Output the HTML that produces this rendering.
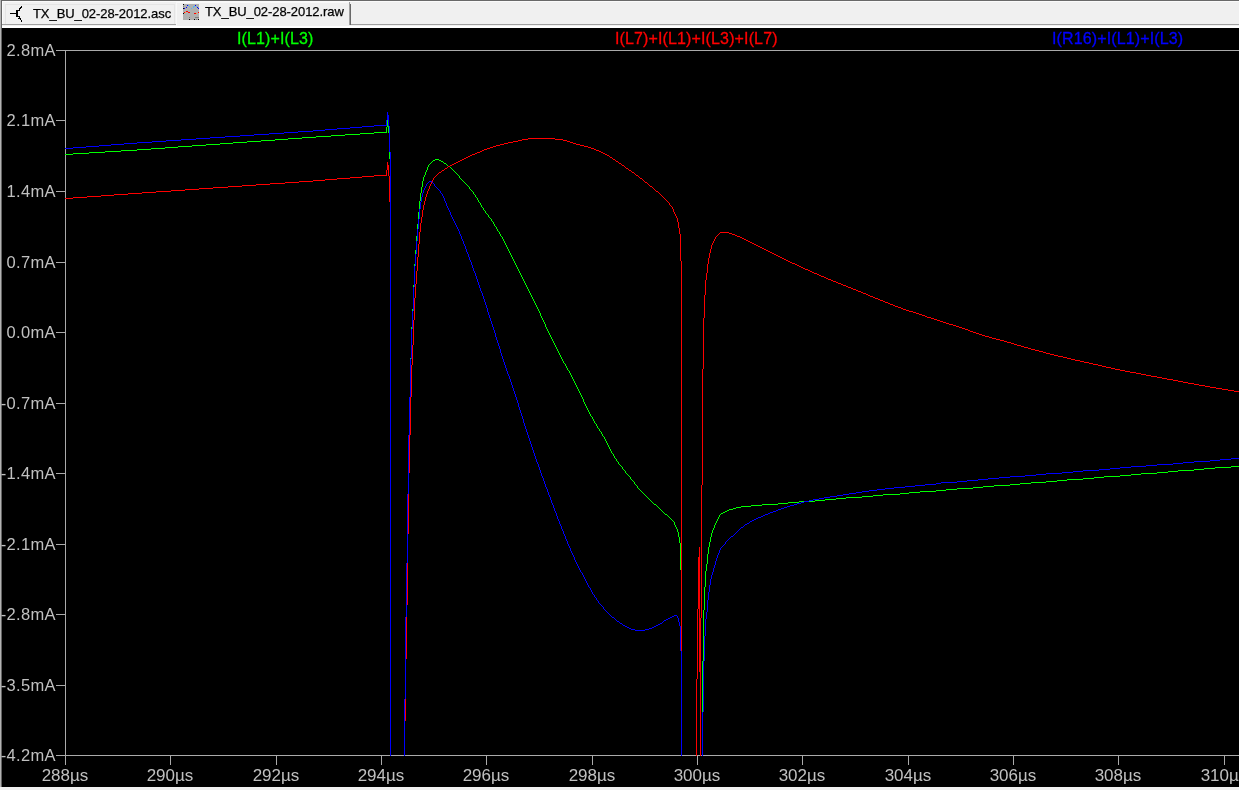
<!DOCTYPE html>
<html><head><meta charset="utf-8"><title>TX_BU_02-28-2012.raw</title>
<style>
html,body{margin:0;padding:0;}
body{width:1239px;height:790px;overflow:hidden;background:#000;position:relative;font-family:"Liberation Sans",sans-serif;}
.tabbar{position:absolute;left:0;top:0;width:1239px;height:28px;background:#f0f0f0;}
.tabbar .t0{position:absolute;left:0;top:0;width:1239px;height:1px;background:#696969;}
.tabbar .t1{position:absolute;left:0;top:1px;width:1239px;height:1px;background:#fafafa;}
.tabbar .l1{position:absolute;left:2px;top:1px;width:1px;height:24px;background:#fafafa;}
.tabbar .b0{position:absolute;left:0;top:24px;width:1239px;height:1px;background:#a0a0a0;}
.tabbar .b1{position:absolute;left:0;top:26px;width:1239px;height:2px;background:#fff;}
.lb{position:absolute;left:0;top:0;width:1px;height:787px;background:#b4b4b4;border-right:1px solid #646464;}
.bb{position:absolute;left:0;top:787px;width:1239px;height:3px;background:#f0f0f0;}
.tab1b{position:absolute;left:5px;top:4px;width:170px;height:20px;border:1px solid #e4e4e4;border-bottom:none;box-sizing:border-box;}
.tab2b{position:absolute;left:176px;top:2px;width:173px;height:24px;background:#f0f0f0;border-left:1px solid #f8f8f8;border-top:1px solid #f8f8f8;box-sizing:border-box;}
.tab2r1{position:absolute;left:349px;top:2px;width:1px;height:23px;background:#a0a0a0;}
.tab2r2{position:absolute;left:350px;top:4px;width:1px;height:21px;background:#696969;}
.tt{position:absolute;font-size:13px;line-height:15px;color:#000;-webkit-text-stroke:0.25px #000;white-space:nowrap;letter-spacing:-0.07px;will-change:transform;}
.plot{position:absolute;left:0;top:0;}
.yl{position:absolute;left:0;width:55.8px;letter-spacing:0.3px;text-align:right;font-size:16.5px;line-height:18px;will-change:transform;color:#c0c0c0;white-space:nowrap;}
.xl{position:absolute;top:767px;width:80px;text-align:center;font-size:17px;line-height:18px;will-change:transform;color:#c0c0c0;white-space:nowrap;}
.tl{position:absolute;top:30px;font-size:16px;line-height:18px;white-space:nowrap;letter-spacing:0.13px;will-change:transform;-webkit-text-stroke:0.3px currentColor;}
</style></head><body>
<div class="tabbar"><div class="t0"></div><div class="t1"></div><div class="l1"></div><div class="b0"></div><div class="b1"></div>
<div class="tab1b"></div><div class="tab2b"></div><div class="tab2r1"></div><div class="tab2r2"></div><svg width="30" height="28" style="position:absolute;left:0;top:0" shape-rendering="crispEdges"><path d="M21 6h1v1h-1zM20 7h2v1h-2zM19 8h2v1h-2zM19 9h1v1h-1zM16 10h4v1h-4zM16 11h2v1h-2zM16 12h2v1h-2zM10 13h8v1h-8zM16 14h2v1h-2zM16 15h2v1h-2zM16 16h4v1h-4zM19 17h1v1h-1zM18 18h3v1h-3zM20 19h1v1h-1zM21 20h1v1h-1zM21 21h1v1h-1z" fill="#000"/></svg><svg width="16" height="16" style="position:absolute;left:183px;top:4px" shape-rendering="crispEdges"><rect width="16" height="16" fill="#b0b0b0"/><path d="M0 0h1v1h-1zM0 4h1v1h-1zM0 9h1v1h-1zM6 15h1v1h-1zM11 15h1v1h-1zM15 15h1v1h-1z" fill="#000"/><path d="M0 2h1v1h-1zM6 13h1v1h-1zM12 13h1v1h-1zM13 13h1v1h-1zM14 13h1v1h-1zM15 13h1v1h-1zM13 15h1v1h-1z" fill="#808080"/><path d="M1 4h1v1h-1zM3 3h1v1h-1zM4 1h1v1h-1zM12 1h1v1h-1zM14 3h1v1h-1zM15 4h1v1h-1z" fill="#0000ff"/><path d="M6 2h1v1h-1zM8 4h1v1h-1zM10 3h1v1h-1zM10 2h1v1h-1zM11 2h1v1h-1zM13 2h1v1h-1zM5 1h1v1h-1z" fill="#5ab4f0"/><path d="M1 8h1v1h-1zM3 7h1v1h-1zM4 7h1v1h-1zM5 8h1v1h-1zM6 8h1v1h-1zM11 9h1v1h-1zM12 9h1v1h-1zM15 8h1v1h-1z" fill="#ff0000"/><path d="M2 8h1v1h-1zM13 9h1v1h-1z" fill="#ffa040"/></svg>
<span class="tt" style="left:33px;top:6px">TX_BU_02-28-2012.asc</span>
<span class="tt" style="left:205px;top:4px">TX_BU_02-28-2012.raw</span>
</div>
<div class="lb"></div><div class="bb"></div>
<svg class="plot" width="1239" height="790" viewBox="0 0 1239 790" shape-rendering="crispEdges"><defs><clipPath id="cp"><rect x="65" y="50" width="1174" height="706"/></clipPath></defs><g stroke="#aaaaaa" stroke-width="1" fill="none"><path d="M65.5 50V765M56 50.5H1239M56 755.5H1239"/><path d="M56 120.5H65M56 191.5H65M56 262.5H65M56 332.5H65M56 403.5H65M56 473.5H65M56 544.5H65M56 614.5H65M56 685.5H65M170.5 755V765M276.5 755V765M381.5 755V765M486.5 755V765M592.5 755V765M697.5 755V765M802.5 755V765M908.5 755V765M1013.5 755V765M1118.5 755V765M1224.5 755V765"/></g><g><path fill="#00ff00" d="m65 154h8v1h-8zm8 -1h16v1h-16zm16 -1h16v1h-16zm16 -1h16v1h-16zm16 -1h16v1h-16zm16 -1h14v1h-14zm14 -1h14v1h-14zm14 -1h13v1h-13zm13 -1h14v1h-14zm14 -1h14v1h-14zm14 -1h14v1h-14zm14 -1h13v1h-13zm13 -1h14v1h-14zm14 -1h14v1h-14zm14 -1h14v1h-14zm14 -1h13v1h-13zm13 -1h14v1h-14zm14 -1h14v1h-14zm14 -1h15v1h-15zm15 -1h14v1h-14zm14 -1h15v1h-15zm15 -1h14v1h-14zm14 -1h12v1h-12zm12 -5h1v6h-1zm1 -7h1v7h-1zm1 6h1v7h-1zm1 7h1v26h-1zm1 26h1v597h-1zm14 540h1v57h-1zm1 -82h1v82h-1zm1 -54h1v54h-1zm1 -69h1v69h-1zm1 -59h1v59h-1zm1 -38h1v38h-1zm1 -39h1v39h-1zm1 -31h1v31h-1zm1 -18h1v18h-1zm1 -24h1v24h-1zm1 -21h1v21h-1zm1 -14h1v14h-1zm1 -14h1v14h-1zm1 -12h1v12h-1zm1 -12h1v12h-1zm1 -11h1v11h-1zm1 -8h1v8h-1zm1 -6h1v6h-1zm1 -6h1v6h-1zm1 -4h1v4h-1zm1 -2h1v2h-1zm1 -3h1v3h-1zm1 -2h1v2h-1zm1 -3h1v3h-1zm1 -2h1v2h-1zm1 -1h1v1h-1zm1 -1h1v1h-1zm1 -1h1v1h-1zm1 -1h1v1h-1zm1 -1h2v1h-2zm2 -1h4v1h-4zm4 1h2v1h-2zm2 1h2v1h-2zm2 1h1v1h-1zm1 1h2v1h-2zm2 1h1v1h-1zm1 1h1v1h-1zm1 1h2v1h-2zm2 1h1v1h-1zm1 1h1v1h-1zm1 1h1v1h-1zm1 1h1v1h-1zm1 1h1v1h-1zm1 1h1v1h-1zm1 1h1v1h-1zm1 1h1v1h-1zm1 1h1v1h-1zm1 1h1v2h-1zm1 2h1v1h-1zm1 1h1v1h-1zm1 1h1v1h-1zm1 1h1v1h-1zm1 1h1v1h-1zm1 1h1v1h-1zm1 1h1v1h-1zm1 1h1v1h-1zm1 1h1v1h-1zm1 1h1v2h-1zm1 2h1v1h-1zm1 1h1v1h-1zm1 1h1v1h-1zm1 1h1v2h-1zm1 2h1v1h-1zm1 1h1v2h-1zm1 2h1v1h-1zm1 1h1v2h-1zm1 2h1v2h-1zm1 2h1v1h-1zm1 1h1v2h-1zm1 2h1v2h-1zm1 2h1v1h-1zm1 1h1v2h-1zm1 2h1v1h-1zm1 1h1v2h-1zm1 2h1v1h-1zm1 1h1v1h-1zm1 1h1v2h-1zm1 2h1v1h-1zm1 1h1v1h-1zm1 1h1v2h-1zm1 2h1v1h-1zm1 1h1v2h-1zm1 2h1v2h-1zm1 2h1v1h-1zm1 1h1v2h-1zm1 2h1v2h-1zm1 2h1v1h-1zm1 1h1v2h-1zm1 2h1v2h-1zm1 2h1v1h-1zm1 1h1v2h-1zm1 2h1v2h-1zm1 2h1v2h-1zm1 2h1v2h-1zm1 2h1v2h-1zm1 2h1v2h-1zm1 2h1v2h-1zm1 2h1v2h-1zm1 2h1v2h-1zm1 2h1v2h-1zm1 2h1v2h-1zm1 2h1v2h-1zm1 2h1v2h-1zm1 2h1v2h-1zm1 2h1v2h-1zm1 2h1v2h-1zm1 2h1v2h-1zm1 2h1v2h-1zm1 2h1v2h-1zm1 2h1v2h-1zm1 2h1v2h-1zm1 2h1v2h-1zm1 2h1v2h-1zm1 2h1v2h-1zm1 2h1v2h-1zm1 2h1v2h-1zm1 2h1v2h-1zm1 2h1v2h-1zm1 2h1v2h-1zm1 2h1v2h-1zm1 2h1v2h-1zm1 2h1v2h-1zm1 2h1v2h-1zm1 2h1v2h-1zm1 2h1v2h-1zm1 2h1v2h-1zm1 2h1v2h-1zm1 2h1v2h-1zm1 2h1v3h-1zm1 3h1v2h-1zm1 2h1v2h-1zm1 2h1v2h-1zm1 2h1v2h-1zm1 2h1v3h-1zm1 3h1v2h-1zm1 2h1v2h-1zm1 2h1v2h-1zm1 2h1v2h-1zm1 2h1v2h-1zm1 2h1v2h-1zm1 2h1v2h-1zm1 2h1v2h-1zm1 2h1v2h-1zm1 2h1v2h-1zm1 2h1v2h-1zm1 2h1v2h-1zm1 2h1v2h-1zm1 2h1v2h-1zm1 2h1v2h-1zm1 2h1v2h-1zm1 2h1v2h-1zm1 2h1v2h-1zm1 2h1v1h-1zm1 1h1v2h-1zm1 2h1v2h-1zm1 2h1v2h-1zm1 2h1v1h-1zm1 1h1v2h-1zm1 2h1v2h-1zm1 2h1v2h-1zm1 2h1v2h-1zm1 2h1v2h-1zm1 2h1v2h-1zm1 2h1v2h-1zm1 2h1v2h-1zm1 2h1v2h-1zm1 2h1v2h-1zm1 2h1v2h-1zm1 2h1v2h-1zm1 2h1v2h-1zm1 2h1v2h-1zm1 2h1v3h-1zm1 3h1v2h-1zm1 2h1v2h-1zm1 2h1v2h-1zm1 2h1v2h-1zm1 2h1v2h-1zm1 2h1v2h-1zm1 2h1v2h-1zm1 2h1v1h-1zm1 1h1v2h-1zm1 2h1v2h-1zm1 2h1v2h-1zm1 2h1v1h-1zm1 1h1v2h-1zm1 2h1v2h-1zm1 2h1v1h-1zm1 1h1v2h-1zm1 2h1v1h-1zm1 1h1v2h-1zm1 2h1v2h-1zm1 2h1v1h-1zm1 1h1v2h-1zm1 2h1v2h-1zm1 2h1v2h-1zm1 2h1v2h-1zm1 2h1v2h-1zm1 2h1v2h-1zm1 2h1v2h-1zm1 2h1v2h-1zm1 2h1v1h-1zm1 1h1v2h-1zm1 2h1v2h-1zm1 2h1v1h-1zm1 1h1v2h-1zm1 2h1v1h-1zm1 1h1v2h-1zm1 2h1v1h-1zm1 1h1v1h-1zm1 1h1v1h-1zm1 1h1v2h-1zm1 2h1v1h-1zm1 1h1v1h-1zm1 1h1v2h-1zm1 2h1v1h-1zm1 1h1v1h-1zm1 1h1v1h-1zm1 1h1v1h-1zm1 1h1v2h-1zm1 2h1v1h-1zm1 1h1v1h-1zm1 1h1v1h-1zm1 1h1v2h-1zm1 2h1v1h-1zm1 1h1v1h-1zm1 1h1v2h-1zm1 2h1v1h-1zm1 1h1v1h-1zm1 1h1v1h-1zm1 1h1v1h-1zm1 1h1v1h-1zm1 1h1v1h-1zm1 1h1v1h-1zm1 1h1v1h-1zm1 1h1v1h-1zm1 1h1v1h-1zm1 1h1v1h-1zm1 1h1v1h-1zm1 1h1v1h-1zm1 1h1v1h-1zm1 1h1v1h-1zm1 1h1v1h-1zm1 1h2v1h-2zm2 1h1v1h-1zm1 1h1v1h-1zm1 1h1v1h-1zm1 1h1v1h-1zm1 1h1v1h-1zm1 1h1v1h-1zm1 1h1v1h-1zm1 1h1v1h-1zm1 1h1v1h-1zm1 1h2v1h-2zm2 1h1v1h-1zm1 1h1v1h-1zm1 1h1v1h-1zm1 1h1v1h-1zm1 1h1v1h-1zm1 1h1v1h-1zm1 1h1v1h-1zm1 1h1v3h-1zm1 3h1v2h-1zm1 2h1v2h-1zm1 2h1v3h-1zm1 3h1v5h-1zm1 5h1v6h-1zm1 6h1v27h-1zm1 27h1v186h-1zm21 91h1v95h-1zm1 -51h1v51h-1zm1 -23h1v23h-1zm1 -16h1v16h-1zm1 -7h1v7h-1zm1 -10h1v10h-1zm1 -7h1v7h-1zm1 -5h1v5h-1zm1 -5h1v5h-1zm1 -4h1v4h-1zm1 -3h1v3h-1zm1 -2h1v2h-1zm1 -3h1v3h-1zm1 -2h1v2h-1zm1 -2h1v2h-1zm1 -2h1v2h-1zm1 -2h1v2h-1zm1 -2h1v2h-1zm1 -1h1v1h-1zm1 -1h2v1h-2zm2 -1h2v1h-2zm2 -1h2v1h-2zm2 -1h2v1h-2zm2 -1h4v1h-4zm4 -1h3v1h-3zm3 -1h5v1h-5zm5 -1h10v1h-10zm10 -1h11v1h-11zm11 -1h16v1h-16zm16 -1h10v1h-10zm10 -1h11v1h-11zm11 -1h16v1h-16zm16 -1h10v1h-10zm10 -1h11v1h-11zm11 -1h10v1h-10zm10 -1h16v1h-16zm16 -1h11v1h-11zm11 -1h10v1h-10zm10 -1h17v1h-17zm17 -1h9v1h-9zm9 -1h11v1h-11zm11 -1h16v1h-16zm16 -1h10v1h-10zm10 -1h11v1h-11zm11 -1h16v1h-16zm16 -1h10v1h-10zm10 -1h11v1h-11zm11 -1h16v1h-16zm16 -1h10v1h-10zm10 -1h11v1h-11zm11 -1h15v1h-15zm15 -1h11v1h-11zm11 -1h10v1h-10zm10 -1h16v1h-16zm16 -1h11v1h-11zm11 -1h10v1h-10zm10 -1h16v1h-16zm16 -1h11v1h-11zm11 -1h10v1h-10zm10 -1h16v1h-16zm16 -1h11v1h-11zm11 -1h10v1h-10zm10 -1h16v1h-16zm16 -1h10v1h-10zm10 -1h11v1h-11zm11 -1h16v1h-16zm16 -1h8v1h-8z"/><path fill="#ff0000" d="m65 198h8v1h-8zm8 -1h14v1h-14zm14 -1h14v1h-14zm14 -1h13v1h-13zm13 -1h14v1h-14zm14 -1h14v1h-14zm14 -1h14v1h-14zm14 -1h15v1h-15zm15 -1h14v1h-14zm14 -1h14v1h-14zm14 -1h14v1h-14zm14 -1h15v1h-15zm15 -1h14v1h-14zm14 -1h14v1h-14zm14 -1h14v1h-14zm14 -1h15v1h-15zm15 -1h14v1h-14zm14 -1h14v1h-14zm14 -1h12v1h-12zm12 -1h12v1h-12zm12 -1h13v1h-13zm13 -1h12v1h-12zm12 -1h12v1h-12zm12 -1h12v1h-12zm12 -5h1v6h-1zm1 -8h1v8h-1zm1 3h1v11h-1zm1 11h1v26h-1zm1 26h1v554h-1zm14 519h1v35h-1zm1 -62h1v62h-1zm1 -54h1v54h-1zm1 -71h1v71h-1zm1 -61h1v61h-1zm1 -38h1v38h-1zm1 -38h1v38h-1zm1 -32h1v32h-1zm1 -20h1v20h-1zm1 -25h1v25h-1zm1 -22h1v22h-1zm1 -14h1v14h-1zm1 -13h1v13h-1zm1 -14h1v14h-1zm1 -13h1v13h-1zm1 -12h1v12h-1zm1 -9h1v9h-1zm1 -6h1v6h-1zm1 -7h1v7h-1zm1 -5h1v5h-1zm1 -4h1v4h-1zm1 -4h1v4h-1zm1 -3h1v3h-1zm1 -3h1v3h-1zm1 -2h1v2h-1zm1 -3h1v3h-1zm1 -2h1v2h-1zm1 -2h1v2h-1zm1 -2h1v2h-1zm1 -2h1v2h-1zm1 -1h1v1h-1zm1 -1h1v1h-1zm1 -1h1v1h-1zm1 -1h1v1h-1zm1 -1h1v1h-1zm1 -1h2v1h-2zm2 -1h1v1h-1zm1 -1h2v1h-2zm2 -1h1v1h-1zm1 -1h2v1h-2zm2 -1h1v1h-1zm1 -1h2v1h-2zm2 -1h2v1h-2zm2 -1h2v1h-2zm2 -1h2v1h-2zm2 -1h2v1h-2zm2 -1h2v1h-2zm2 -1h2v1h-2zm2 -1h2v1h-2zm2 -1h2v1h-2zm2 -1h2v1h-2zm2 -1h2v1h-2zm2 -1h2v1h-2zm2 -1h3v1h-3zm3 -1h2v1h-2zm2 -1h3v1h-3zm3 -1h2v1h-2zm2 -1h2v1h-2zm2 -1h3v1h-3zm3 -1h3v1h-3zm3 -1h3v1h-3zm3 -1h3v1h-3zm3 -1h4v1h-4zm4 -1h4v1h-4zm4 -1h4v1h-4zm4 -1h5v1h-5zm5 -1h5v1h-5zm5 -1h4v1h-4zm4 -1h6v1h-6zm6 -1h27v1h-27zm27 1h8v1h-8zm8 1h4v1h-4zm4 1h3v1h-3zm3 1h3v1h-3zm3 1h3v1h-3zm3 1h4v1h-4zm4 1h4v1h-4zm4 1h4v1h-4zm4 1h3v1h-3zm3 1h3v1h-3zm3 1h2v1h-2zm2 1h3v1h-3zm3 1h2v1h-2zm2 1h2v1h-2zm2 1h2v1h-2zm2 1h2v1h-2zm2 1h2v1h-2zm2 1h1v1h-1zm1 1h2v1h-2zm2 1h1v1h-1zm1 1h2v1h-2zm2 1h1v1h-1zm1 1h2v1h-2zm2 1h1v1h-1zm1 1h2v1h-2zm2 1h1v1h-1zm1 1h2v1h-2zm2 1h1v1h-1zm1 1h1v1h-1zm1 1h2v1h-2zm2 1h1v1h-1zm1 1h2v1h-2zm2 1h1v1h-1zm1 1h2v1h-2zm2 1h1v1h-1zm1 1h1v1h-1zm1 1h2v1h-2zm2 1h1v1h-1zm1 1h1v1h-1zm1 1h2v1h-2zm2 1h1v1h-1zm1 1h1v1h-1zm1 1h1v1h-1zm1 1h2v1h-2zm2 1h1v1h-1zm1 1h1v1h-1zm1 1h1v1h-1zm1 1h2v1h-2zm2 1h1v1h-1zm1 1h1v1h-1zm1 1h1v1h-1zm1 1h1v1h-1zm1 1h2v1h-2zm2 1h1v1h-1zm1 1h1v1h-1zm1 1h1v1h-1zm1 1h1v1h-1zm1 1h1v1h-1zm1 1h1v1h-1zm1 1h1v1h-1zm1 1h1v1h-1zm1 1h1v1h-1zm1 1h1v1h-1zm1 1h1v1h-1zm1 1h1v2h-1zm1 2h1v1h-1zm1 1h1v1h-1zm1 1h1v2h-1zm1 2h1v3h-1zm1 3h1v2h-1zm1 2h1v2h-1zm1 2h1v2h-1zm1 2h1v4h-1zm1 4h1v6h-1zm1 6h1v6h-1zm1 6h1v27h-1zm1 27h1v495h-1zm15 418h1v77h-1zm1 -70h1v70h-1zm1 -52h1v52h-1zm1 -10h1v125h-1zm1 71h1v138h-1zm1 -133h1v133h-1zm1 -116h1v116h-1zm1 -51h1v51h-1zm1 -23h1v23h-1zm1 -15h1v15h-1zm1 -7h1v7h-1zm1 -9h1v9h-1zm1 -6h1v6h-1zm1 -5h1v5h-1zm1 -4h1v4h-1zm1 -4h1v4h-1zm1 -2h1v2h-1zm1 -2h1v2h-1zm1 -2h1v2h-1zm1 -2h1v2h-1zm1 -1h1v1h-1zm1 -1h1v1h-1zm1 -1h1v1h-1zm1 -1h1v1h-1zm1 -1h9v1h-9zm9 1h3v1h-3zm3 1h3v1h-3zm3 1h2v1h-2zm2 1h3v1h-3zm3 1h2v1h-2zm2 1h2v1h-2zm2 1h2v1h-2zm2 1h2v1h-2zm2 1h2v1h-2zm2 1h2v1h-2zm2 1h2v1h-2zm2 1h2v1h-2zm2 1h2v1h-2zm2 1h2v1h-2zm2 1h2v1h-2zm2 1h2v1h-2zm2 1h2v1h-2zm2 1h2v1h-2zm2 1h2v1h-2zm2 1h2v1h-2zm2 1h2v1h-2zm2 1h2v1h-2zm2 1h2v1h-2zm2 1h2v1h-2zm2 1h2v1h-2zm2 1h2v1h-2zm2 1h2v1h-2zm2 1h2v1h-2zm2 1h2v1h-2zm2 1h2v1h-2zm2 1h3v1h-3zm3 1h2v1h-2zm2 1h2v1h-2zm2 1h2v1h-2zm2 1h2v1h-2zm2 1h2v1h-2zm2 1h3v1h-3zm3 1h2v1h-2zm2 1h2v1h-2zm2 1h2v1h-2zm2 1h3v1h-3zm3 1h2v1h-2zm2 1h2v1h-2zm2 1h3v1h-3zm3 1h2v1h-2zm2 1h2v1h-2zm2 1h3v1h-3zm3 1h2v1h-2zm2 1h3v1h-3zm3 1h2v1h-2zm2 1h3v1h-3zm3 1h2v1h-2zm2 1h3v1h-3zm3 1h2v1h-2zm2 1h3v1h-3zm3 1h2v1h-2zm2 1h3v1h-3zm3 1h2v1h-2zm2 1h3v1h-3zm3 1h2v1h-2zm2 1h3v1h-3zm3 1h2v1h-2zm2 1h2v1h-2zm2 1h3v1h-3zm3 1h2v1h-2zm2 1h3v1h-3zm3 1h2v1h-2zm2 1h3v1h-3zm3 1h2v1h-2zm2 1h3v1h-3zm3 1h2v1h-2zm2 1h3v1h-3zm3 1h2v1h-2zm2 1h3v1h-3zm3 1h3v1h-3zm3 1h2v1h-2zm2 1h3v1h-3zm3 1h3v1h-3zm3 1h4v1h-4zm4 1h3v1h-3zm3 1h3v1h-3zm3 1h3v1h-3zm3 1h3v1h-3zm3 1h2v1h-2zm2 1h4v1h-4zm4 1h3v1h-3zm3 1h3v1h-3zm3 1h3v1h-3zm3 1h3v1h-3zm3 1h3v1h-3zm3 1h3v1h-3zm3 1h4v1h-4zm4 1h3v1h-3zm3 1h3v1h-3zm3 1h3v1h-3zm3 1h3v1h-3zm3 1h3v1h-3zm3 1h2v1h-2zm2 1h3v1h-3zm3 1h3v1h-3zm3 1h3v1h-3zm3 1h3v1h-3zm3 1h3v1h-3zm3 1h4v1h-4zm4 1h3v1h-3zm3 1h4v1h-4zm4 1h4v1h-4zm4 1h4v1h-4zm4 1h3v1h-3zm3 1h4v1h-4zm4 1h3v1h-3zm3 1h3v1h-3zm3 1h4v1h-4zm4 1h3v1h-3zm3 1h4v1h-4zm4 1h3v1h-3zm3 1h4v1h-4zm4 1h4v1h-4zm4 1h4v1h-4zm4 1h3v1h-3zm3 1h4v1h-4zm4 1h4v1h-4zm4 1h4v1h-4zm4 1h5v1h-5zm5 1h4v1h-4zm4 1h4v1h-4zm4 1h4v1h-4zm4 1h5v1h-5zm5 1h4v1h-4zm4 1h5v1h-5zm5 1h4v1h-4zm4 1h5v1h-5zm5 1h4v1h-4zm4 1h4v1h-4zm4 1h5v1h-5zm5 1h4v1h-4zm4 1h5v1h-5zm5 1h5v1h-5zm5 1h5v1h-5zm5 1h6v1h-6zm6 1h5v1h-5zm5 1h5v1h-5zm5 1h5v1h-5zm5 1h6v1h-6zm6 1h5v1h-5zm5 1h5v1h-5zm5 1h6v1h-6zm6 1h5v1h-5zm5 1h5v1h-5zm5 1h5v1h-5zm5 1h6v1h-6zm6 1h5v1h-5zm5 1h6v1h-6zm6 1h5v1h-5zm5 1h6v1h-6zm6 1h6v1h-6zm6 1h6v1h-6zm6 1h6v1h-6zm6 1h5v1h-5z"/><path fill="#0000ff" d="m65 148h8v1h-8zm8 -1h13v1h-13zm13 -1h13v1h-13zm13 -1h12v1h-12zm12 -1h13v1h-13zm13 -1h13v1h-13zm13 -1h15v1h-15zm15 -1h14v1h-14zm14 -1h15v1h-15zm15 -1h15v1h-15zm15 -1h14v1h-14zm14 -1h15v1h-15zm15 -1h15v1h-15zm15 -1h14v1h-14zm14 -1h15v1h-15zm15 -1h15v1h-15zm15 -1h14v1h-14zm14 -1h15v1h-15zm15 -1h12v1h-12zm12 -1h12v1h-12zm12 -1h13v1h-13zm13 -1h12v1h-12zm12 -1h12v1h-12zm12 -1h12v1h-12zm12 -5h1v6h-1zm1 -8h1v8h-1zm1 3h1v11h-1zm1 11h1v26h-1zm1 26h1v604h-1zm14 547h1v57h-1zm1 -82h1v82h-1zm1 -54h1v54h-1zm1 -69h1v69h-1zm1 -59h1v59h-1zm1 -38h1v38h-1zm1 -38h1v38h-1zm1 -30h1v30h-1zm1 -18h1v18h-1zm1 -24h1v24h-1zm1 -21h1v21h-1zm1 -12h1v12h-1zm1 -13h1v13h-1zm1 -12h1v12h-1zm1 -10h1v10h-1zm1 -10h1v10h-1zm1 -7h1v7h-1zm1 -5h1v5h-1zm1 -4h1v4h-1zm1 -3h1v3h-1zm1 -2h1v2h-1zm1 -2h1v2h-1zm1 -2h1v2h-1zm1 -1h1v1h-1zm1 -1h1v1h-1zm1 -1h3v1h-3zm3 1h1v1h-1zm1 1h1v1h-1zm1 1h1v2h-1zm1 2h1v1h-1zm1 1h1v1h-1zm1 1h1v1h-1zm1 1h1v1h-1zm1 1h1v1h-1zm1 1h1v2h-1zm1 2h1v1h-1zm1 1h1v2h-1zm1 2h1v2h-1zm1 2h1v3h-1zm1 3h1v2h-1zm1 2h1v3h-1zm1 3h1v2h-1zm1 2h1v2h-1zm1 2h1v2h-1zm1 2h1v3h-1zm1 3h1v2h-1zm1 2h1v2h-1zm1 2h1v2h-1zm1 2h1v2h-1zm1 2h1v2h-1zm1 2h1v2h-1zm1 2h1v2h-1zm1 2h1v2h-1zm1 2h1v3h-1zm1 3h1v2h-1zm1 2h1v3h-1zm1 3h1v2h-1zm1 2h1v3h-1zm1 3h1v2h-1zm1 2h1v3h-1zm1 3h1v3h-1zm1 3h1v2h-1zm1 2h1v3h-1zm1 3h1v3h-1zm1 3h1v2h-1zm1 2h1v3h-1zm1 3h1v3h-1zm1 3h1v3h-1zm1 3h1v2h-1zm1 2h1v3h-1zm1 3h1v3h-1zm1 3h1v3h-1zm1 3h1v3h-1zm1 3h1v3h-1zm1 3h1v3h-1zm1 3h1v2h-1zm1 2h1v3h-1zm1 3h1v3h-1zm1 3h1v3h-1zm1 3h1v3h-1zm1 3h1v3h-1zm1 3h1v4h-1zm1 4h1v3h-1zm1 3h1v3h-1zm1 3h1v3h-1zm1 3h1v3h-1zm1 3h1v3h-1zm1 3h1v3h-1zm1 3h1v3h-1zm1 3h1v4h-1zm1 4h1v3h-1zm1 3h1v3h-1zm1 3h1v3h-1zm1 3h1v3h-1zm1 3h1v4h-1zm1 4h1v3h-1zm1 3h1v3h-1zm1 3h1v3h-1zm1 3h1v3h-1zm1 3h1v3h-1zm1 3h1v3h-1zm1 3h1v3h-1zm1 3h1v2h-1zm1 2h1v3h-1zm1 3h1v3h-1zm1 3h1v3h-1zm1 3h1v3h-1zm1 3h1v3h-1zm1 3h1v3h-1zm1 3h1v3h-1zm1 3h1v3h-1zm1 3h1v3h-1zm1 3h1v4h-1zm1 4h1v3h-1zm1 3h1v3h-1zm1 3h1v3h-1zm1 3h1v3h-1zm1 3h1v4h-1zm1 4h1v3h-1zm1 3h1v3h-1zm1 3h1v3h-1zm1 3h1v3h-1zm1 3h1v3h-1zm1 3h1v3h-1zm1 3h1v3h-1zm1 3h1v3h-1zm1 3h1v3h-1zm1 3h1v3h-1zm1 3h1v3h-1zm1 3h1v3h-1zm1 3h1v3h-1zm1 3h1v2h-1zm1 2h1v3h-1zm1 3h1v3h-1zm1 3h1v3h-1zm1 3h1v3h-1zm1 3h1v2h-1zm1 2h1v3h-1zm1 3h1v3h-1zm1 3h1v3h-1zm1 3h1v2h-1zm1 2h1v3h-1zm1 3h1v3h-1zm1 3h1v2h-1zm1 2h1v3h-1zm1 3h1v3h-1zm1 3h1v2h-1zm1 2h1v3h-1zm1 3h1v3h-1zm1 3h1v2h-1zm1 2h1v3h-1zm1 3h1v3h-1zm1 3h1v2h-1zm1 2h1v3h-1zm1 3h1v2h-1zm1 2h1v3h-1zm1 3h1v2h-1zm1 2h1v3h-1zm1 3h1v2h-1zm1 2h1v3h-1zm1 3h1v2h-1zm1 2h1v3h-1zm1 3h1v2h-1zm1 2h1v2h-1zm1 2h1v3h-1zm1 3h1v2h-1zm1 2h1v2h-1zm1 2h1v2h-1zm1 2h1v3h-1zm1 3h1v2h-1zm1 2h1v2h-1zm1 2h1v2h-1zm1 2h1v2h-1zm1 2h1v2h-1zm1 2h1v2h-1zm1 2h1v1h-1zm1 1h1v2h-1zm1 2h1v2h-1zm1 2h1v2h-1zm1 2h1v2h-1zm1 2h1v2h-1zm1 2h1v2h-1zm1 2h1v2h-1zm1 2h1v1h-1zm1 1h1v2h-1zm1 2h1v2h-1zm1 2h1v2h-1zm1 2h1v1h-1zm1 1h1v2h-1zm1 2h1v1h-1zm1 1h1v2h-1zm1 2h1v1h-1zm1 1h1v2h-1zm1 2h1v1h-1zm1 1h1v1h-1zm1 1h1v1h-1zm1 1h1v1h-1zm1 1h1v2h-1zm1 2h1v1h-1zm1 1h1v1h-1zm1 1h1v1h-1zm1 1h1v1h-1zm1 1h1v1h-1zm1 1h1v1h-1zm1 1h1v1h-1zm1 1h1v1h-1zm1 1h2v1h-2zm2 1h1v1h-1zm1 1h1v1h-1zm1 1h1v1h-1zm1 1h2v1h-2zm2 1h1v1h-1zm1 1h2v1h-2zm2 1h1v1h-1zm1 1h2v1h-2zm2 1h2v1h-2zm2 1h2v1h-2zm2 1h2v1h-2zm2 1h4v1h-4zm4 1h10v1h-10zm10 -1h4v1h-4zm4 -1h3v1h-3zm3 -1h2v1h-2zm2 -1h2v1h-2zm2 -1h2v1h-2zm2 -1h2v1h-2zm2 -1h2v1h-2zm2 -1h1v1h-1zm1 -1h1v1h-1zm1 -1h2v1h-2zm2 -1h2v1h-2zm2 -1h2v1h-2zm2 -1h2v1h-2zm2 -1h2v1h-2zm2 -1h3v1h-3zm3 1h1v2h-1zm1 2h1v4h-1zm1 4h1v4h-1zm1 4h1v25h-1zm1 25h1v105h-1zm21 61h1v44h-1zm1 -51h1v51h-1zm1 -25h1v25h-1zm1 -17h1v17h-1zm1 -7h1v7h-1zm1 -12h1v12h-1zm1 -8h1v8h-1zm1 -7h1v7h-1zm1 -6h1v6h-1zm1 -4h1v4h-1zm1 -3h1v3h-1zm1 -4h1v4h-1zm1 -3h1v3h-1zm1 -4h1v4h-1zm1 -3h1v3h-1zm1 -3h1v3h-1zm1 -2h1v2h-1zm1 -3h1v3h-1zm1 -2h1v2h-1zm1 -1h1v1h-1zm1 -1h1v1h-1zm1 -1h1v1h-1zm1 -1h1v1h-1zm1 -2h1v2h-1zm1 -1h1v1h-1zm1 -1h1v1h-1zm1 -1h1v1h-1zm1 -1h1v1h-1zm1 -1h1v1h-1zm1 -1h2v1h-2zm2 -1h1v1h-1zm1 -1h1v1h-1zm1 -1h1v1h-1zm1 -1h1v1h-1zm1 -1h1v1h-1zm1 -1h1v1h-1zm1 -1h1v1h-1zm1 -1h1v1h-1zm1 -1h2v1h-2zm2 -1h1v1h-1zm1 -1h1v1h-1zm1 -1h2v1h-2zm2 -1h2v1h-2zm2 -1h1v1h-1zm1 -1h2v1h-2zm2 -1h2v1h-2zm2 -1h2v1h-2zm2 -1h2v1h-2zm2 -1h3v1h-3zm3 -1h2v1h-2zm2 -1h2v1h-2zm2 -1h3v1h-3zm3 -1h2v1h-2zm2 -1h3v1h-3zm3 -1h3v1h-3zm3 -1h2v1h-2zm2 -1h3v1h-3zm3 -1h3v1h-3zm3 -1h3v1h-3zm3 -1h3v1h-3zm3 -1h4v1h-4zm4 -1h3v1h-3zm3 -1h4v1h-4zm4 -1h3v1h-3zm3 -1h5v1h-5zm5 -1h4v1h-4zm4 -1h6v1h-6zm6 -1h5v1h-5zm5 -1h6v1h-6zm6 -1h7v1h-7zm7 -1h6v1h-6zm6 -1h6v1h-6zm6 -1h7v1h-7zm7 -1h6v1h-6zm6 -1h7v1h-7zm7 -1h8v1h-8zm8 -1h8v1h-8zm8 -1h9v1h-9zm9 -1h11v1h-11zm11 -1h10v1h-10zm10 -1h10v1h-10zm10 -1h11v1h-11zm11 -1h5v1h-5zm5 -1h16v1h-16zm16 -1h10v1h-10zm10 -1h11v1h-11zm11 -1h10v1h-10zm10 -1h11v1h-11zm11 -1h11v1h-11zm11 -1h15v1h-15zm15 -1h11v1h-11zm11 -1h10v1h-10zm10 -1h16v1h-16zm16 -1h11v1h-11zm11 -1h10v1h-10zm10 -1h16v1h-16zm16 -1h11v1h-11zm11 -1h10v1h-10zm10 -1h11v1h-11zm11 -1h15v1h-15zm15 -1h11v1h-11zm11 -1h16v1h-16zm16 -1h10v1h-10zm10 -1h11v1h-11zm11 -1h16v1h-16zm16 -1h10v1h-10zm10 -1h11v1h-11zm11 -1h8v1h-8z"/></g></svg>
<div class="yl" style="top:41px">2.8mA</div><div class="yl" style="top:111px">2.1mA</div><div class="yl" style="top:182px">1.4mA</div><div class="yl" style="top:253px">0.7mA</div><div class="yl" style="top:323px">0.0mA</div><div class="yl" style="top:394px">-0.7mA</div><div class="yl" style="top:464px">-1.4mA</div><div class="yl" style="top:535px">-2.1mA</div><div class="yl" style="top:605px">-2.8mA</div><div class="yl" style="top:676px">-3.5mA</div><div class="yl" style="top:746px">-4.2mA</div><div class="xl" style="left:25px">288µs</div><div class="xl" style="left:130px">290µs</div><div class="xl" style="left:236px">292µs</div><div class="xl" style="left:341px">294µs</div><div class="xl" style="left:446px">296µs</div><div class="xl" style="left:552px">298µs</div><div class="xl" style="left:657px">300µs</div><div class="xl" style="left:762px">302µs</div><div class="xl" style="left:868px">304µs</div><div class="xl" style="left:973px">306µs</div><div class="xl" style="left:1078px">308µs</div><div class="xl" style="left:1184px">310µs</div>
<div class="tl" style="left:237px;color:#00ff00">I(L1)+I(L3)</div>
<div class="tl" style="left:614.5px;color:#ff0000">I(L7)+I(L1)+I(L3)+I(L7)</div>
<div class="tl" style="left:1052px;color:#0000ff">I(R16)+I(L1)+I(L3)</div>
</body></html>
